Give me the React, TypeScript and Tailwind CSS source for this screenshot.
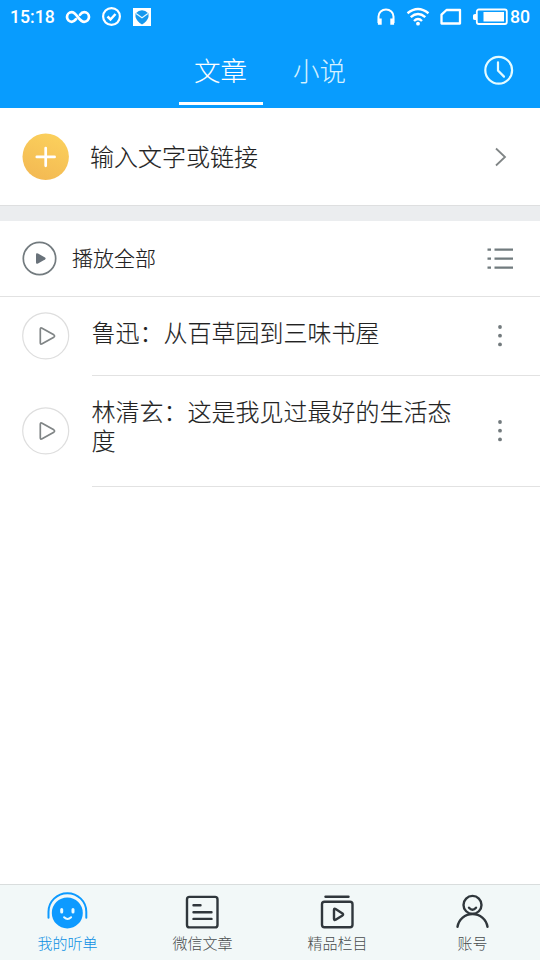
import type { ReactNode } from 'react';

function StatusBar() {
  return (
    <div className="flex h-[34px] items-center justify-between pl-[10px] pr-[10px] text-white">
      <div className="flex items-center">
        <span className="w-[46px] whitespace-nowrap font-[Roboto] text-[17.7px] font-medium leading-[34px]">15:18</span>
        <svg className="ml-[9px]" width="26" height="16" viewBox="0 0 26 16" fill="none" stroke="currentColor" strokeWidth="2.700" strokeLinecap="round">
          <path d="M11 10.200C9.600 12 8.400 12.800 6.800 12.800A4.800 4.800 0 1 1 6.800 3.200C11.500 3.200 14 12.800 19.200 12.800A4.800 4.800 0 1 0 19.200 3.200C17.500 3.200 16.200 4.200 15 5.800" />
        </svg>
        <svg className="ml-[10px]" width="20" height="20" viewBox="0 0 20 20" fill="none" stroke="currentColor">
          <circle cx="10.500" cy="9.500" r="8.400" strokeWidth="2.200" />
          <path d="M6.500 9.500l3 3 5-5.500" strokeWidth="2.500" />
        </svg>
        <svg className="ml-[12px]" width="18" height="18" viewBox="0 0 18 18">
          <path fill="#fff" d="M0 0h18v18H0z" />
          <path fill="#1698ee" d="M2.500 5.500Q9-1 15.500 5.500V9q-1.500 4.500-6.500 7.500Q4 13.500 2.500 9z" />
          <path fill="none" stroke="#e6f7ff" strokeWidth="1.200" d="M3 5.500l6 4.200 6-4.200" />
        </svg>
      </div>
      <div className="flex items-center">
        <svg width="18" height="18" viewBox="0 0 18 18" fill="none" stroke="currentColor" strokeWidth="2">
          <path d="M1.500 15V8.500a7.500 7 0 0 1 15 0V15" />
          <path d="M2.800 10.500v6.200M15.200 10.500v6.200" strokeWidth="3.800" />
        </svg>
        <svg className="ml-[11px]" width="24" height="20" viewBox="0 0 24 20" fill="none" stroke="currentColor" strokeWidth="2.400">
          <path d="M1.500 6.200Q12-2.200 22.500 6.200M4.700 10.200Q12 4 19.300 10.200M8 14Q12 10.200 16 14" />
          <circle cx="12" cy="16.700" r="1.900" fill="currentColor" stroke="none" />
        </svg>
        <svg className="ml-[10px]" width="22" height="18" viewBox="0 0 22 18" fill="none" stroke="currentColor" strokeWidth="2.300" strokeLinejoin="round">
          <path d="M6.500 2H20v13.500H1.500V6.700z" />
        </svg>
        <svg className="ml-[11px]" width="35" height="18" viewBox="0 0 35 18">
          <rect x="3.800" y="1.500" width="30" height="14.500" rx="2" fill="none" stroke="currentColor" strokeWidth="1.800" />
          <path fill="currentColor" d="M10.500 4h20.500v9.500H10.500zM0 7.500Q0 6 2 6h2v6H2Q0 12 0 10.500z" />
        </svg>
        <span className="ml-[2px] font-[Roboto] text-[17.7px] font-medium leading-[34px]">80</span>
      </div>
    </div>
  );
}

function Header() {
  return (
    <header className="h-[108px] bg-[#089cfe]">
      <StatusBar />
      <div className="grid h-[74px] grid-cols-[178.5px_84px_15px_84px_1fr] text-[26.5px] font-light text-white [-webkit-text-stroke:0.05px]">
        <span />
        <div className="flex h-[71px] flex-col items-center border-b-[3px] border-white">
          <span className="pt-[16px] leading-[40px]">文章</span>
        </div>
        <span />
        <div className="flex flex-col items-center text-[#d5f1ff]">
          <span className="pt-[16px] leading-[40px]">小说</span>
        </div>
        <div className="flex justify-end pr-[26px] pt-[21px]">
          <svg width="30" height="30" viewBox="0 0 30 30" fill="none" stroke="#e4fbff" strokeWidth="2.200" strokeLinecap="round">
            <circle cx="14.700" cy="15.200" r="13.400" />
            <path d="M14 7.300v8.300l6 6" />
          </svg>
        </div>
      </div>
    </header>
  );
}

function Article({ title, className }: { title: string; className: string }) {
  return (
    <li className="flex">
      <div className="flex w-[92px] items-center pb-[2px] pl-[22px]">
        <svg width="48" height="48" viewBox="0 0 48 48" fill="none">
          <circle cx="23.700" cy="23.800" r="23" stroke="#dedede" strokeWidth="1.200" />
          <path d="M18.300 17.200v13.600q0 2 1.800 1L31.800 25.200q1.500-1.200 0-2.400L20.100 16.200q-1.800-1-1.800 1z" stroke="#808586" strokeWidth="1.700" />
        </svg>
      </div>
      <div className={`flex flex-1 justify-between border-b border-[#e2e2e2] ${className}`}>
        <p className="-ml-[0.5px] w-[362px] text-[24px] font-light leading-[29px] text-[#222] [-webkit-text-stroke:0.12px]">{title}</p>
        <svg className="-mt-[21px] mr-[37px] self-center" width="6" height="24" viewBox="0 0 6 24" fill="#727a7d">
          <circle cx="3" cy="3" r="1.900" />
          <circle cx="3" cy="11.700" r="1.900" />
          <circle cx="3" cy="20.400" r="1.900" />
        </svg>
      </div>
    </li>
  );
}

function NavItem({ label, active, children }: { label: string; active?: boolean; children: ReactNode }) {
  return (
    <div className={`flex flex-1 flex-col items-center pt-[6px] text-[15px] font-light ${active ? 'text-[#0c8fe3]' : 'text-[#484c4e]'}`}>
      <svg width="44" height="40" viewBox="0.5 0.3 44 40" fill="none" stroke="#30373c" strokeWidth="2.400" strokeLinecap="round" strokeLinejoin="round">
        {children}
      </svg>
      <span className="mt-px leading-[22px]">{label}</span>
    </div>
  );
}

export default function App() {
  return (
    <div className="flex h-[960px] w-[540px] flex-col overflow-hidden bg-white font-['Noto_Sans_CJK_SC',sans-serif]">
      <Header />
      <section className="flex h-[98px] items-center border-b border-[#dedfe0] pl-[22px] pr-[33px]">
        <svg width="48" height="48" viewBox="0 0 48 48">
          <defs>
            <linearGradient id="gold" x1="0.700" y1="0" x2="0.300" y2="1">
              <stop stopColor="#fbd05c" />
              <stop offset="1" stopColor="#f3b953" />
            </linearGradient>
          </defs>
          <circle cx="23.700" cy="23.800" r="23.200" fill="url(#gold)" />
          <path d="M23.700 15v17.800M14.800 23.900h17.800" stroke="#fff" strokeWidth="2.700" strokeLinecap="round" />
        </svg>
        <span className="ml-[20px] flex-1 pb-[2px] text-[24px] font-light leading-[36px] text-[#222] [-webkit-text-stroke:0.12px]">输入文字或链接</span>
        <svg width="12" height="20" viewBox="0 0 12 20" fill="none" stroke="#808586" strokeWidth="1.800">
          <path d="M1 1.500l9 8.500-9 8.500" />
        </svg>
      </section>
      <div className="h-[15px] bg-[#ebedef]" />
      <section className="flex h-[76px] items-center border-b border-[#e2e2e2] pl-[22px] pr-[27px]">
        <svg width="35" height="35" viewBox="0 0 35 35" fill="none">
          <circle cx="17.500" cy="17.500" r="16.200" stroke="#737b7f" strokeWidth="1.700" />
          <path d="M14 13.500v8q0 2 2 1L23 18.500q1.300-1 0-2L16 12.500q-2-1-2 1z" fill="#69727a" />
        </svg>
        <span className="ml-[15px] flex-1 pb-[3px] text-[21px] font-light leading-[32px] text-[#222] [-webkit-text-stroke:0.12px]">播放全部</span>
        <svg width="26" height="22" viewBox="0 0 26 22" fill="none" stroke="#717b7e" strokeWidth="2.200">
          <path d="M.5 1.700H4M7.500 1.700H26M.5 10.700H4M7.500 10.700H26M.5 19.700H4M7.500 19.700H26" />
        </svg>
      </section>
      <ul className="flex-1">
        <Article title="鲁迅：从百草园到三味书屋" className="h-[79px] pt-[20px]" />
        <Article title="林清玄：这是我见过最好的生活态度" className="h-[111px] pt-[20px]" />
      </ul>
      <nav className="flex h-[76px] border-t border-[#d9dddd] bg-[#f2f8f8]">
        <NavItem label="我的听单" active>
          <circle cx="21.800" cy="22.200" r="15.500" fill="#0d9aff" stroke="none" />
          <path d="M3 27V21a18.900 18.500 0 0 1 37.800 0v6" stroke="#0d9aff" strokeWidth="2" />
          <path d="M16.200 18.800v2.500M27.500 18.800v2.500" stroke="#eafaff" strokeWidth="3" />
          <path d="M18.600 26.500q3.500 3.500 7 0" stroke="#eafaff" strokeWidth="2" />
        </NavItem>
        <NavItem label="微信文章">
          <rect x="6.500" y="6.200" width="30.500" height="30.500" rx="2.500" />
          <path d="M13 14.500h7M13 21.500h18M13 28.200h18" />
        </NavItem>
        <NavItem label="精品栏目">
          <path d="M10 6h23" />
          <rect x="6.500" y="11" width="30.500" height="25.500" rx="2.500" />
          <path d="M18.500 19.300v8.800q0 1.800 1.600 .9l6.900-4.300q1.200-1 0-2l-6.900-4.300q-1.600-.9-1.600 .9z" />
        </NavItem>
        <NavItem label="账号">
          <circle cx="22" cy="14.200" r="9" />
          <path d="M7 36a15.200 15.200 0 0 1 30 0" />
          <path d="M18.500 17q3.500 4 7 0" />
        </NavItem>
      </nav>
    </div>
  );
}
